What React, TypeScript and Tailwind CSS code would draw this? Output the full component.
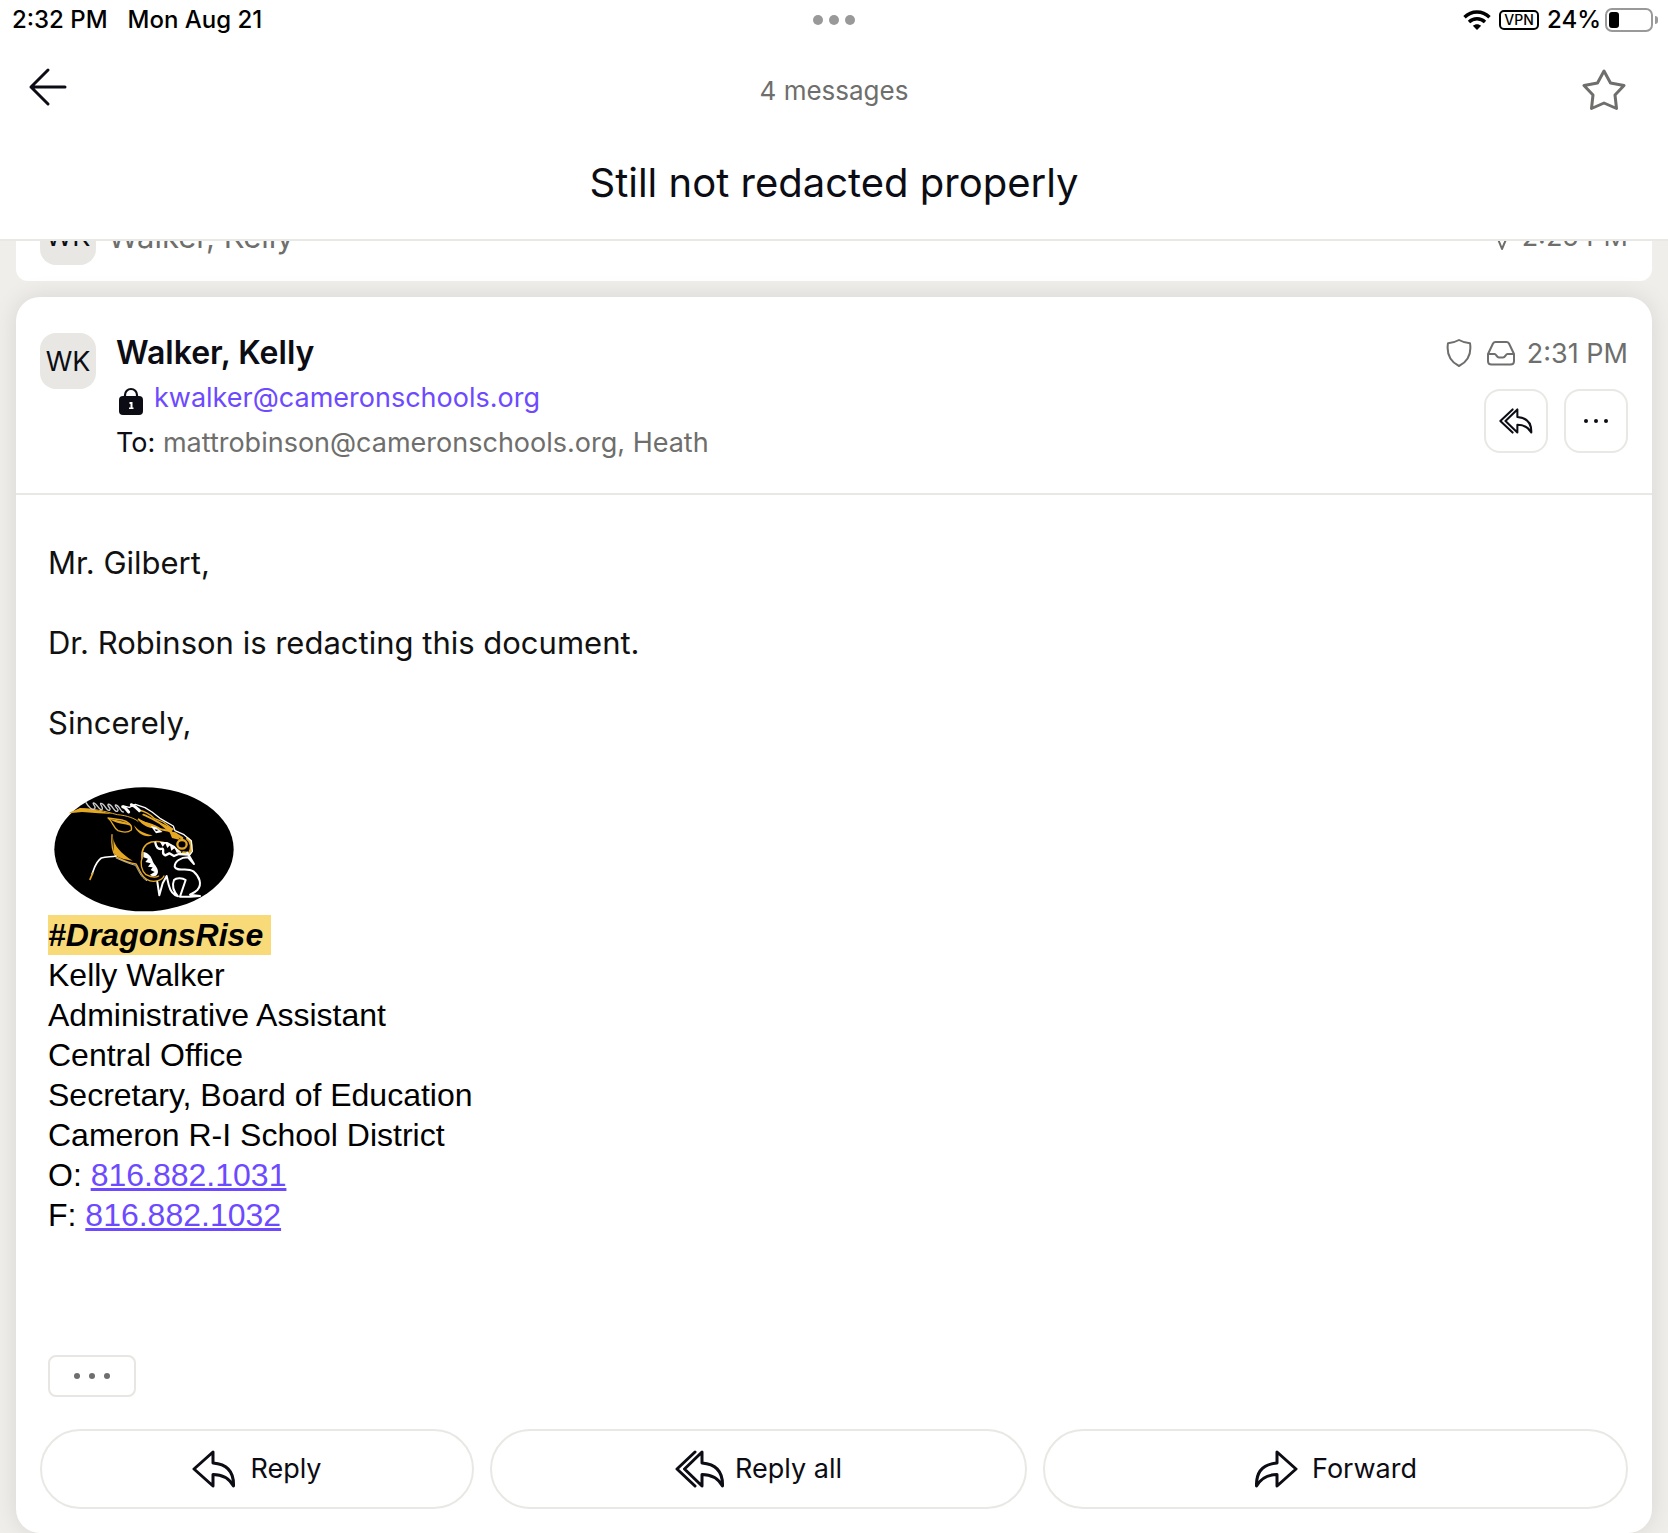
import * as React from "react";

const actions = [
  { id: "reply", label: "Reply", icon: <ReplyIcon />, gap: "gap-3.5" },
  { id: "reply-all", label: "Reply all", icon: <ReplyAllIcon className="w-[50px] h-[38px]" />, gap: "gap-2.5" },
  { id: "forward", label: "Forward", icon: <ForwardIcon />, gap: "gap-3.5" },
];

const signature = [
  "Kelly Walker",
  "Administrative Assistant",
  "Central Office",
  "Secretary, Board of Education",
  "Cameron R-I School District",
];

function ReplyIcon() {
  return (
    <svg className="w-11 h-[38px]" viewBox="0 0 44 38" fill="none" stroke="currentColor" strokeWidth="3" strokeLinejoin="round">
      <path d="M2 19 21 2V13C34 14 42 21 41.500 36C37 28 30 24.500 21 24.500V36Z" />
    </svg>
  );
}

function ForwardIcon() {
  return (
    <svg className="w-11 h-[38px]" viewBox="0 0 44 38" fill="none" stroke="currentColor" strokeWidth="3" strokeLinejoin="round">
      <path d="M42 19 23 2V13C10 14 2 21 2.500 36C7 28 14 24.500 23 24.500V36Z" />
    </svg>
  );
}

function ReplyAllIcon({ className }: { className: string }) {
  return (
    <svg className={className} viewBox="0 0 50 38" fill="none" stroke="currentColor" strokeWidth="3" strokeLinejoin="round" strokeLinecap="round">
      <path d="M20 2 2 19 20 36" />
      <path d="M9.500 19 27 2V13C40 14 48 21 47.500 36C43 28 36 24.500 27 24.500V36Z" />
    </svg>
  );
}

function DragonLogo() {
  return (
    <svg className="w-[180px] h-[125px]" viewBox="72 52 540 373" role="img" aria-label="Cameron Dragons">
      <ellipse cx="342" cy="238" rx="269" ry="186" fill="#000" />
      <g fill="none" stroke="#e5a823" strokeLinejoin="round" strokeLinecap="round">
        <path strokeWidth="3" d="M120 128 148 118C190 114 224 124 262 134C290 136 316 146 324 154" />
        <path strokeWidth="4" d="M234 144C248 154 250 174 264 182C280 188 294 188 304 180C308 166 294 154 276 150Z" />
        <path strokeWidth="4" d="M246 194C244 222 246 246 258 260C280 272 300 280 318 282C328 296 332 318 350 328C370 340 396 332 402 318" />
        <path strokeWidth="5" d="M336 264C334 240 344 222 364 216C384 212 404 216 422 226L452 246" />
        <path strokeWidth="4" d="M336 264C330 280 334 302 348 314C364 322 376 324 386 318" />
        <path strokeWidth="4" d="M326 120C346 124 362 134 374 146L400 156 426 176" />
        <path strokeWidth="6" d="M326 148C340 162 366 160 392 178L424 184M340 134C362 142 388 160 410 170L428 178" />
        <path strokeWidth="8" d="M426 190C438 188 446 200 456 204M472 206C486 216 486 236 478 250L460 248" />
        <ellipse cx="456" cy="223" rx="14" ry="13" strokeWidth="7" />
      </g>
      <g fill="#e5a823">
        <path d="M118 130 150 114C188 116 216 124 246 132L206 130 156 126Z" />
        <path d="M250 204C252 226 272 250 308 272C282 268 258 264 251 246Z" />
        <path d="M312 166C326 184 346 192 368 196C348 206 320 190 312 166Z" />
        <path d="M326 148C348 158 370 164 388 174L362 174C344 168 332 162 326 148Z" />
        <path d="M386 160 430 176 420 188Z" />
        <path d="M238 146C264 152 296 154 306 168C282 160 258 162 238 146Z" />
        <path d="M418 184 440 188 450 210 426 204Z" />
      </g>
      <g fill="none" stroke="#fff" strokeLinejoin="round" strokeLinecap="round">
        <path strokeWidth="4" stroke="#ccc" d="M168 98C176 112 188 122 194 116C200 108 186 104 190 99C200 98 208 124 216 119C222 112 208 104 212 100C224 98 228 124 238 121C246 116 230 108 234 103C246 100 252 128 262 124C270 118 252 110 256 105C268 104 272 128 280 126" />
        <path strokeWidth="9" d="M278 110C288 112 290 120 296 126M304 104C316 108 322 116 328 122" />
        <path strokeWidth="4" d="M280 108 298 112 316 103 345 113 366 126 390 145 430 168 435 182 462 194 484 212 487 244 480 254" />
        <path strokeWidth="5" d="M186 312C192 298 196 276 214 264C230 258 244 262 258 258" />
        <path strokeWidth="2" d="M258 264C280 274 300 282 316 286C326 300 330 320 350 332" />
        <path strokeWidth="7" d="M376 218C378 232 384 240 398 236C404 244 392 250 406 256L418 250 432 258 446 252 476 254" />
        <path strokeWidth="6" d="M472 248 492 282 474 262C452 262 434 274 434 290C440 308 470 290 490 304C508 320 518 342 502 360C492 370 482 372 480 374L510 378 482 380 450 380 467 330C456 322 438 324 432 330C424 350 434 368 444 379C428 374 420 360 416 344L410 318 398 340 388 376 382 336" />
      </g>
      <path d="M180 328 188 310" stroke="#e5a823" strokeWidth="5" strokeLinecap="round" />
      <g fill="#fff">
        <path d="M362 168 378 172 398 186 378 190Z" />
        <path d="M390 216 398 230 406 220 412 234 420 226 424 242 434 234 440 248 454 248 434 228 412 216Z" />
        <path d="M340 246C352 248 362 256 366 268C370 284 384 290 384 306C382 320 370 322 360 314L374 306 362 300 368 292 354 290 362 280 346 276 354 266 340 262Z" />
      </g>
      <path d="M374 178 386 180 378 184Z" fill="#000" />
    </svg>
  );
}

function StatusBar() {
  return (
    <div className="grid grid-cols-3 items-center h-10 px-2.5 text-2xl leading-7 font-medium text-black">
      <div className="flex gap-5 pl-0.5">
        <span>2:32 PM</span>
        <span>Mon Aug 21</span>
      </div>
      <div className="flex justify-center gap-1.5">
        <span className="size-2.5 rounded-full bg-[#999]" />
        <span className="size-2.5 rounded-full bg-[#999]" />
        <span className="size-2.5 rounded-full bg-[#999]" />
      </div>
      <div className="flex items-center justify-end">
        <svg className="w-7 h-5 mr-2" viewBox="0 0 28 20" fill="none" stroke="#000" strokeWidth="3.4">
          <path d="M1.500 7.200C8.500 0.200 19.500 0.200 26.500 7.200" />
          <path d="M6 12C10.500 7.700 17.500 7.700 22 12" />
          <path d="M14 20 9.800 15.800C12.200 13.600 15.800 13.600 18.200 15.800Z" fill="#000" stroke="none" />
        </svg>
        <span className="flex items-center justify-center w-10 h-5 mr-2 rounded-[5px] border-2 border-black text-sm font-medium">VPN</span>
        <span className="mr-1">24%</span>
        <span className="w-12 h-6 p-0.5 rounded-[7px] border-2 border-[#999]">
          <span className="block w-2.5 h-4 rounded-[3px] bg-black" />
        </span>
        <span className="w-[3px] h-2 ml-0.5 rounded-r-full bg-[#999]" />
      </div>
    </div>
  );
}

export default function App() {
  return (
    <div className="min-h-screen flex flex-col bg-[#efeeea] font-[Inter,'Liberation_Sans',sans-serif] text-[#0c0c14]">
      <header className="bg-white border-b-2 border-[#e8e8e4]">
        <StatusBar />
        <div className="grid grid-cols-3 items-center h-[100px] px-7">
          <button type="button" aria-label="Back" className="justify-self-start -mt-1.5">
            <svg className="size-10" viewBox="0 0 40 40" fill="none" stroke="currentColor" strokeWidth="3" strokeLinecap="round" strokeLinejoin="round">
              <path d="M20 3 3 20 20 37M3 20H37" />
            </svg>
          </button>
          <span className="pt-0.5 text-center text-[26px] leading-8 text-[#6e6e6c]">4 messages</span>
          <button type="button" aria-label="Star" className="justify-self-end mr-3.5">
            <svg className="w-11 h-[42px]" viewBox="0 0 44 42" fill="none" stroke="#6e6e6c" strokeWidth="3" strokeLinejoin="round">
              <path d="M22 2 28.500 14 42 16.500 33 26 34.500 39.500 22 34 9.500 39.500 11 26 2 16.500 15.500 14Z" />
            </svg>
          </button>
        </div>
        <h1 className="h-[99px] pt-4 text-center text-[40px] leading-[54px] font-normal">Still not redacted properly</h1>
      </header>

      <main className="grow flex flex-col gap-4 px-4">
        {/* Previous message, scrolled under the header */}
        <section className="flex items-end h-10 px-6 pb-4 overflow-hidden rounded-b-xl bg-white text-[27px] text-[#6e6e6c]">
          <div className="flex grow items-center">
            <span className="flex items-center justify-center size-14 mr-3 rounded-2xl bg-[#e8e7e3] text-[#0c0c14]">WK</span>
            <span className="grow text-[31px]">Walker, Kelly</span>
            <svg className="size-7 mr-2" viewBox="0 0 28 28" fill="none" stroke="currentColor" strokeWidth="2" strokeLinejoin="round">
              <path d="M2 12 26 2 16 26 12 16Z" />
            </svg>
            <span>2:25 PM</span>
          </div>
        </section>

        <article className="grow flex flex-col rounded-3xl bg-white shadow-[0_0_24px_rgba(0,0,0,0.1)]">
          <div className="flex items-start h-[198px] pt-9 px-6 border-b-2 border-[#e8e8e4] text-[27px] leading-[45px]">
            <span className="flex items-center justify-center size-14 mr-5 rounded-2xl bg-[#e8e7e3]">WK</span>
            <div className="grow -mt-[3px]">
              <h2 className="text-[32px] font-semibold">Walker, Kelly</h2>
              <div className="flex items-center gap-2.5">
                <svg className="w-7 h-7 mt-1.5" viewBox="0 0 28 28">
                  <path d="M9 10V8a6 6 0 0 1 12 0V10" fill="none" stroke="currentColor" strokeWidth="2.200" />
                  <rect x="3" y="9" width="24" height="19" rx="4" fill="currentColor" />
                  <path d="M13.500 15H16.500V20.500H17.500V22H13V20.500H14.500V17H13.500Z" fill="#fff" />
                </svg>
                <a href="mailto:kwalker@cameronschools.org" className="text-[#6d4aff]">kwalker@cameronschools.org</a>
              </div>
              <p>
                To: <span className="text-[#6e6e6c]">mattrobinson@cameronschools.org, Heath</span>
              </p>
            </div>
            <div className="flex flex-col items-end">
              <div className="flex items-center h-10 mb-4 text-[#6e6e6c]">
                <svg className="size-7 mr-3.5" viewBox="0 0 28 28" fill="none" stroke="currentColor" strokeWidth="2" strokeLinejoin="round">
                  <path d="M14 1C10.500 3 6.500 4 3 4.200C1.500 14 5 22.500 14 27C23 22.500 26.500 14 25 4.200C21.500 4 17.500 3 14 1Z" />
                </svg>
                <svg className="size-7 mr-3" viewBox="0 0 28 28" fill="none" stroke="currentColor" strokeWidth="2" strokeLinejoin="round">
                  <path d="M1 15 6 4.500Q6.800 3 8.500 3H19.500Q21.200 3 22 4.500L27 15V22Q27 25.500 23.500 25.500H4.500Q1 25.500 1 22ZM1 15H7.500C9.500 15 9.500 18.500 12 18.500H16C18.500 18.500 18.500 15 20.500 15H27" />
                </svg>
                <time>2:31 PM</time>
              </div>
              <div className="flex gap-4">
                <button type="button" aria-label="Reply all" className="flex items-center justify-center size-16 rounded-2xl border-2 border-[#e8e8e4]">
                  <ReplyAllIcon className="w-[34px] h-[26px]" />
                </button>
                <button type="button" aria-label="More actions" className="flex items-center justify-center gap-1.5 size-16 rounded-2xl border-2 border-[#e8e8e4]">
                  <span className="size-1 rounded-full bg-[#0c0c14]" />
                  <span className="size-1 rounded-full bg-[#0c0c14]" />
                  <span className="size-1 rounded-full bg-[#0c0c14]" />
                </button>
              </div>
            </div>
          </div>

          <div className="grow px-8 pt-12 text-[31px] leading-10 text-[#111]">
            <p>Mr. Gilbert,</p>
            <p className="mt-10">Dr. Robinson is redacting this document.</p>
            <p className="mt-10">Sincerely,</p>

            <div className="mt-11 text-[32px] font-['Liberation_Sans',Arial,sans-serif] text-black">
              <div className="pl-1.5 pb-[3px]">
                <DragonLogo />
              </div>
              <p>
                <span className="inline-block h-10 pr-2 bg-[#f8da78] font-bold italic">#DragonsRise</span>
              </p>
              {signature.map((line) => (
                <p key={line}>{line}</p>
              ))}
              <p>
                O: <a href="tel:8168821031" className="text-[#6d4aff] underline">816.882.1031</a>
              </p>
              <p>
                F: <a href="tel:8168821032" className="text-[#6d4aff] underline">816.882.1032</a>
              </p>
            </div>
          </div>

          <button type="button" aria-label="Show quoted text" className="flex items-center justify-center gap-[9px] w-[88px] h-[42px] ml-8 mb-8 rounded-lg border-2 border-[#e8e6e3]">
            <span className="size-1.5 rounded-full bg-[#6e6e6c]" />
            <span className="size-1.5 rounded-full bg-[#6e6e6c]" />
            <span className="size-1.5 rounded-full bg-[#6e6e6c]" />
          </button>

          <div className="grid grid-cols-[434fr_537fr_585fr] gap-4 px-6 pb-6">
            {actions.map((action) => (
              <button
                key={action.id}
                type="button"
                className={`flex items-center justify-center h-20 rounded-full border-2 border-[#e8e8e4] text-[27px] ${action.gap}`}
              >
                {action.icon}
                <span>{action.label}</span>
              </button>
            ))}
          </div>
        </article>
      </main>
    </div>
  );
}
